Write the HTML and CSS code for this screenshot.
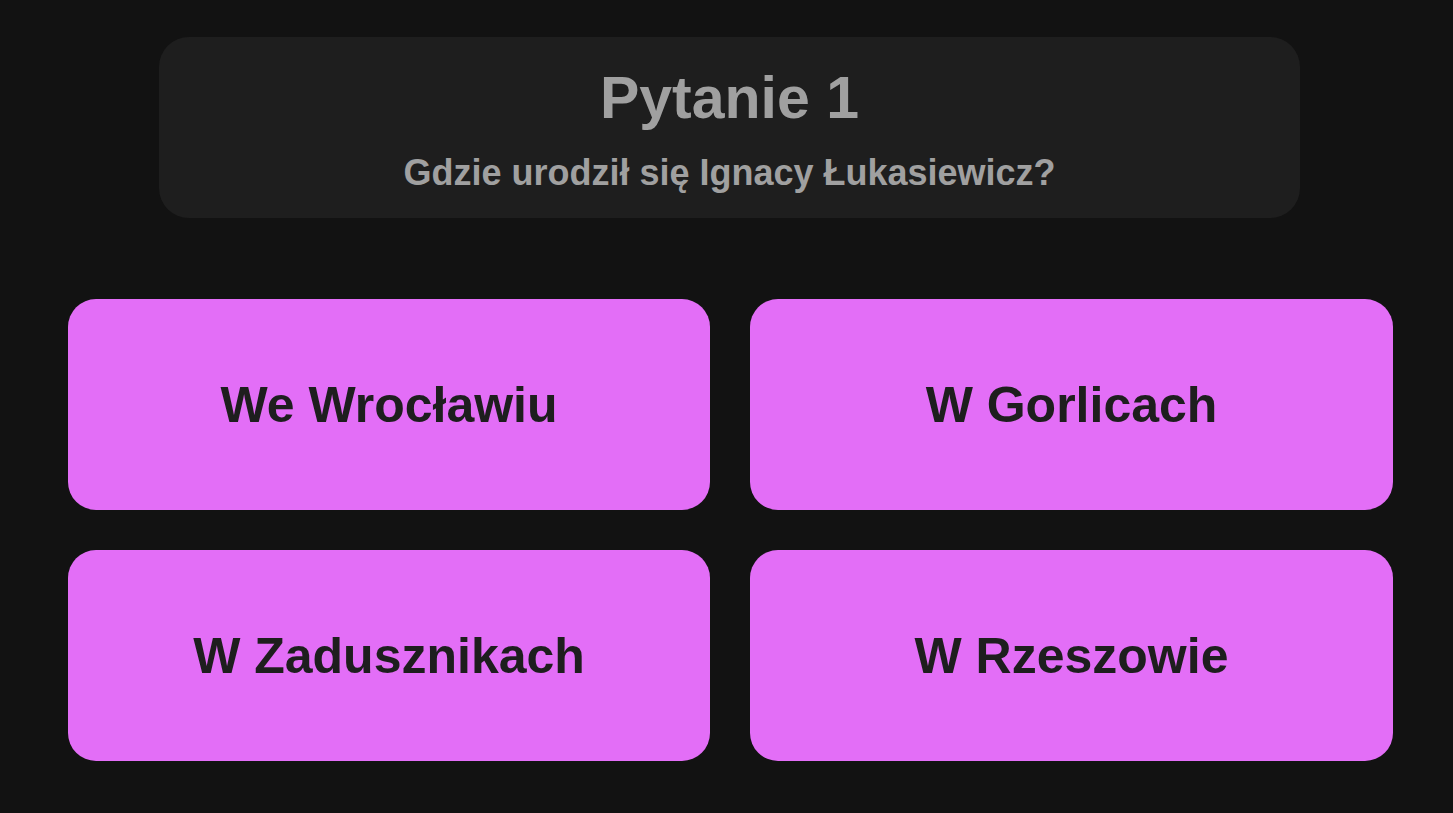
FILE: index.html
```html
<!DOCTYPE html>
<html lang="pl">
<head>
<meta charset="utf-8">
<title>Quiz</title>
<link rel="stylesheet" href="styles.css">
</head>
<body>
<main class="page">
  <section class="question-card">
    <h1 class="question-title">Pytanie 1</h1>
    <p class="question-text">Gdzie urodził się Ignacy Łukasiewicz?</p>
  </section>
  <div class="answers">
    <button class="answer">We Wrocławiu</button>
    <button class="answer">W Gorlicach</button>
    <button class="answer">W Zadusznikach</button>
    <button class="answer">W Rzeszowie</button>
  </div>
</main>
</body>
</html>
```
FILE: styles.css
```css
html, body {
  margin: 0;
  padding: 0;
  background: #121212;
  font-family: "Liberation Sans", Arial, sans-serif;
}
.page {
  padding-top: 37px;
  display: flex;
  flex-direction: column;
}
.question-card {
  margin-left: 159px;
  width: 1141px;
  height: 181px;
  box-sizing: border-box;
  background: #1e1e1e;
  border-radius: 30px;
  display: flex;
  flex-direction: column;
  align-items: center;
  padding-top: 32px;
}
.question-title {
  margin: 0;
  font-size: 59px;
  line-height: 1;
  font-weight: bold;
  color: #a0a0a0;
}
.question-text {
  margin: 27px 0 0;
  font-size: 36px;
  line-height: 1;
  font-weight: bold;
  color: #a0a0a0;
}
.answers {
  margin-top: 81px;
  margin-left: 68px;
  width: 1325px;
  display: grid;
  grid-template-columns: 642px 643px;
  grid-auto-rows: 211px;
  column-gap: 40px;
  row-gap: 40px;
}
.answer {
  border: none;
  border-radius: 28px;
  background: #e36ef7;
  color: #1e1e1e;
  font-family: "Liberation Sans", Arial, sans-serif;
  font-weight: bold;
  font-size: 50px;
  padding: 0;
  cursor: pointer;
}
```
